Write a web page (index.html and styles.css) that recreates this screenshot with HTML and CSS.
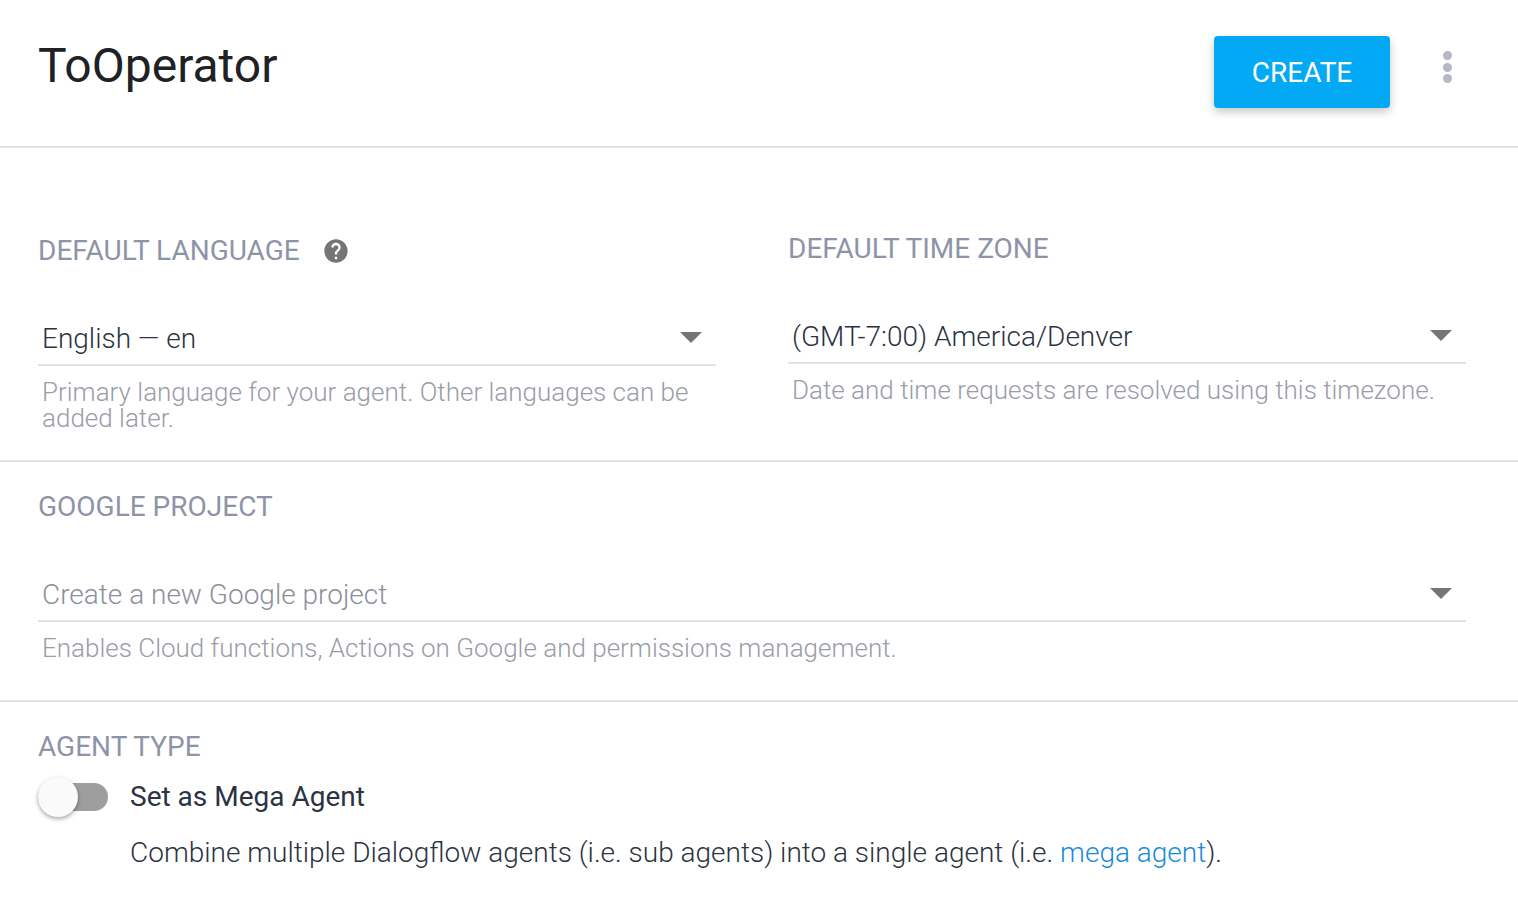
FILE: index.html
```html
<!DOCTYPE html>
<html lang="en">
<head>
<meta charset="utf-8">
<title>ToOperator</title>
<link rel="stylesheet" href="styles.css">
</head>
<body>
<header class="header">
  <h1 class="title">ToOperator</h1>
  <div class="actions">
    <button class="create" type="button">CREATE</button>
    <span class="more" aria-label="More"><i></i><i></i><i></i></span>
  </div>
</header>
<section class="section locale">
  <div class="col col-lang">
    <div class="label-row">
      <h2 class="label">DEFAULT LANGUAGE</h2>
      <svg class="help" viewBox="0 0 24 24" width="28" height="28"><path fill="#757575" d="M12 2C6.48 2 2 6.48 2 12s4.48 10 10 10 10-4.48 10-10S17.52 2 12 2zm1 17h-2v-2h2v2zm2.07-7.75l-.9.92C13.45 12.9 13 13.5 13 15h-2v-.5c0-1.1.45-2.1 1.17-2.83l1.24-1.26c.37-.36.59-.86.59-1.41 0-1.1-.9-2-2-2s-2 .9-2 2H8c0-2.21 1.79-4 4-4s4 1.79 4 4c0 .88-.36 1.68-.93 2.25z"/></svg>
    </div>
    <div class="select"><span class="value">English — en</span><span class="caret"></span></div>
    <p class="hint">Primary language for your agent. Other languages can be added later.</p>
  </div>
  <div class="col col-zone">
    <div class="label-row">
      <h2 class="label">DEFAULT TIME ZONE</h2>
    </div>
    <div class="select"><span class="value">(GMT-7:00) America/Denver</span><span class="caret"></span></div>
    <p class="hint">Date and time requests are resolved using this timezone.</p>
  </div>
</section>
<section class="section project">
  <h2 class="label">GOOGLE PROJECT</h2>
  <div class="select"><span class="value placeholder">Create a new Google project</span><span class="caret"></span></div>
  <p class="hint">Enables Cloud functions, Actions on Google and permissions management.</p>
</section>
<section class="agent">
  <h2 class="label">AGENT TYPE</h2>
  <div class="toggle-row">
    <span class="switch"><span class="knob"></span></span>
    <span class="toggle-label">Set as Mega Agent</span>
  </div>
  <p class="desc">Combine multiple Dialogflow agents (i.e. sub agents) into a single agent (i.e. <a href="#">mega agent</a>).</p>
</section>
</body>
</html>
```
FILE: styles.css
```css
* { box-sizing: border-box; }
html, body { margin: 0; padding: 0; }
body {
  width: 1518px;
  height: 910px;
  overflow: hidden;
  background: #fff;
  font-family: Roboto, "Liberation Sans", sans-serif;
  color: #2b3342;
}
h1, h2, p { margin: 0; font-weight: 400; }

.header {
  height: 148px;
  border-bottom: 2px solid #e3e3e3;
  display: flex;
  align-items: flex-start;
  justify-content: space-between;
  padding: 36px 62px 0 38px;
}
.title { font-size: 48px; line-height: 60px; color: #202124; }
.actions { display: flex; align-items: flex-start; gap: 48px; }
.create {
  width: 176px;
  height: 72px;
  border: 0;
  border-radius: 4px;
  background: #03a9f4;
  color: #fff;
  font: 400 28px Roboto, sans-serif;
  box-shadow: 0 4px 10px rgba(0, 0, 0, .22);
  padding: 0;
}
.more { display: flex; flex-direction: column; gap: 2.5px; width: 18px; align-items: center; margin-top: 15px; }
.more i { width: 9px; height: 9px; border-radius: 50%; background: #b5b7c6; }

.section { border-bottom: 2px solid #e3e3e3; }
.locale {
  height: 314px;
  padding: 0 52px 0 38px;
  display: flex;
  gap: 72px;
}
.col { flex: 1 1 0; min-width: 0; }
.col-lang { padding-top: 85px; }
.col-zone { padding-top: 83px; }
.label-row { display: flex; align-items: center; gap: 22px; height: 36px; }
.label { font-size: 28px; line-height: 36px; color: #8e94a8; }
.help { display: block; }
.select {
  margin-top: 51px;
  height: 46px;
  border-bottom: 2px solid #e3e3e3;
  display: flex;
  align-items: flex-start;
  justify-content: space-between;
  padding: 0 14px 0 4px;
}
.value { font-size: 28px; line-height: 38px; font-weight: 300; color: #2b3342; }
.value.placeholder { color: #8d8f9b; }
.caret {
  width: 0;
  height: 0;
  margin-top: 12px;
  border-left: 11px solid transparent;
  border-right: 11px solid transparent;
  border-top: 11px solid #757575;
}
.hint {
  margin-top: 13px;
  padding-left: 4px;
  font-size: 26px;
  line-height: 26px;
  font-weight: 300;
  color: #9a9ca8;
}
.project {
  height: 240px;
  padding: 27px 52px 0 38px;
}
.project .select { margin-top: 51px; }
.agent { padding: 27px 38px 0; }
.toggle-row { display: flex; align-items: center; gap: 22px; margin-top: 10px; height: 44px; }
.switch {
  position: relative;
  width: 70px;
  height: 28px;
  border-radius: 14px;
  background: #9e9e9e;
  flex: none;
}
.knob {
  position: absolute;
  left: 0;
  top: -6px;
  width: 40px;
  height: 40px;
  border-radius: 50%;
  background: #fafafa;
  box-shadow: 0 2px 4px rgba(0, 0, 0, .35);
}
.toggle-label { font-size: 28px; line-height: 36px; color: #2b3342; }
.desc { margin-top: 15px; padding-left: 92px; font-size: 28px; line-height: 38px; font-weight: 300; color: #2b3342; }
.desc a { color: #1a8bd8; text-decoration: none; }
```
